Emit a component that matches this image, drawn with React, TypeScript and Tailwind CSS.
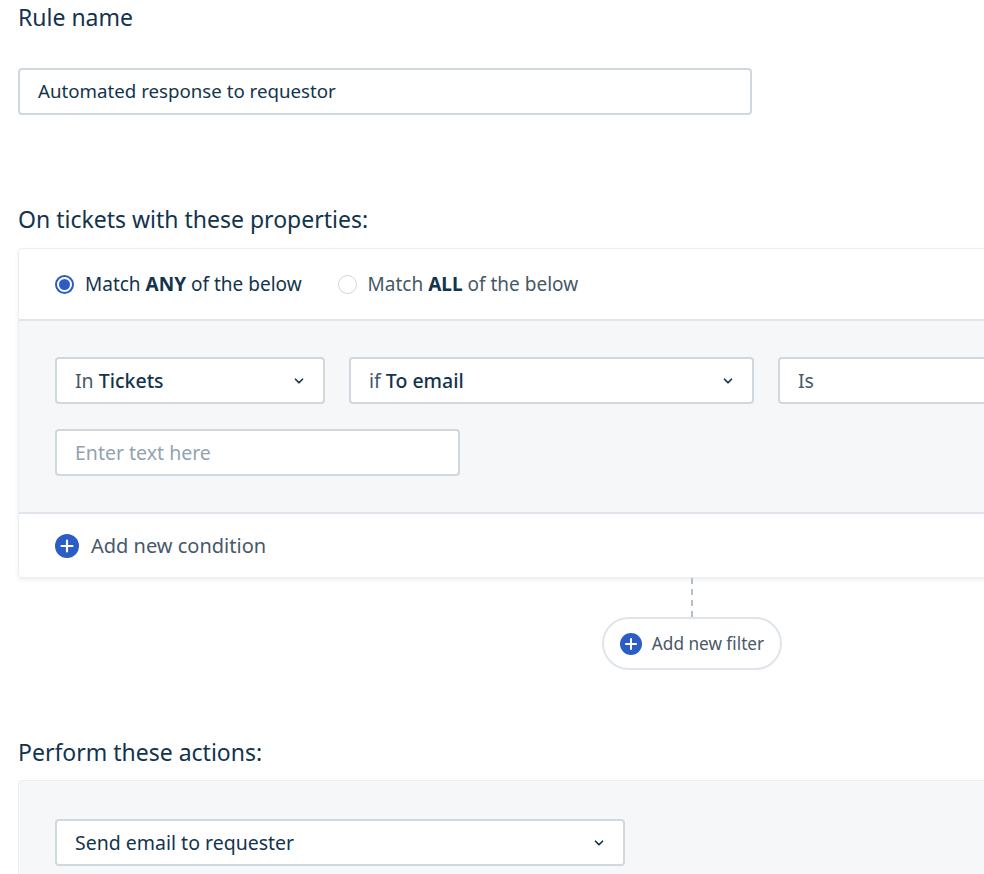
import React, { useState } from 'react';
import { ChevronDown } from 'lucide-react';

const PlusCircle: React.FC<{ size?: number }> = ({ size = 24 }) => (
  <svg width={size} height={size} viewBox="0 0 24 24" className="shrink-0">
    <circle cx="12" cy="12" r="12" fill="#2c5cc5" />
    <path d="M12 6.5v11M6.5 12h11" stroke="#fff" strokeWidth="2.2" strokeLinecap="round" />
  </svg>
);

const SelectBox: React.FC<{ prefix?: string; value: string; className?: string; caret?: boolean; strong?: boolean }> = ({
  prefix,
  value,
  className = '',
  caret = true,
  strong = false,
}) => (
  <div
    className={`h-[47px] shrink-0 flex items-center justify-between rounded-[4px] border-2 border-[#cfd7df] bg-white pl-[18px] pr-[17px] ${className}`}
  >
    <span className="text-[19.5px]">
      {prefix && <span className="text-[#475867]">{prefix} </span>}
      <span className={`text-[#12344d] ${strong ? 'font-medium' : ''}`}>{value}</span>
    </span>
    {caret && <ChevronDown size={14} strokeWidth={3} className="text-[#12344d]" />}
  </div>
);

const Radio: React.FC<{ checked: boolean; label: string; strong: string; onClick: () => void }> = ({
  checked,
  label,
  strong,
  onClick,
}) => (
  <button onClick={onClick} className="flex items-center gap-[11px]">
    {checked ? (
      <span className="w-[19px] h-[19px] rounded-full border-2 border-[#2c5cc5] flex items-center justify-center">
        <span className="w-[11px] h-[11px] rounded-full bg-[#2c5cc5]" />
      </span>
    ) : (
      <span className="w-[19px] h-[19px] rounded-full border border-[#cfd7df] bg-white" />
    )}
    <span className={`text-[19px] ${checked ? 'text-[#12344d]' : 'text-[#475867]'}`}>
      {label} <b className="font-bold text-[#12344d]">{strong}</b> of the below
    </span>
  </button>
);

const App: React.FC = () => {
  const [matchAll, setMatchAll] = useState(false);

  return (
    <div className="w-[984px] h-[874px] overflow-hidden bg-white font-['Noto_Sans',sans-serif] text-[#12344d]">
      <div className="pl-[18px] w-[1100px]">
        <h2 className="text-[23px] leading-[28px] pt-[3px]">Rule name</h2>
        <div className="mt-[37px] w-[734px] h-[47px] rounded-[4px] border-2 border-[#cfd7df] flex items-center px-[18px] text-[18.7px]">
          Automated response to requestor
        </div>

        <h2 className="mt-[90px] text-[23px] leading-[28px]">On tickets with these properties:</h2>
        <div className="mt-[15px] rounded-[4px] border border-[#ebeff3] shadow-[0_2px_4px_rgba(18,52,77,0.08)]">
          <div className="h-[70px] flex items-center gap-[36px] pl-[36px]">
            <Radio checked={!matchAll} label="Match" strong="ANY" onClick={() => setMatchAll(false)} />
            <Radio checked={matchAll} label="Match" strong="ALL" onClick={() => setMatchAll(true)} />
          </div>
          <div className="bg-[#f5f7f9] border-y-2 border-[#dfe5ea] pt-[36px] pb-[36px] pl-[36px] flex flex-col gap-[25px]">
            <div className="flex gap-[24px]">
              <SelectBox prefix="In" value="Tickets" strong className="w-[270px]" />
              <SelectBox prefix="if" value="To email" strong className="w-[405px]" />
              <SelectBox prefix="" value="Is" caret={false} className="w-[300px] [&_span]:text-[#475867]" />
            </div>
            <div className="w-[405px] h-[47px] rounded-[4px] border-2 border-[#cfd7df] bg-white flex items-center px-[18px] text-[19.5px] text-[#92a2b1]">
              Enter text here
            </div>
          </div>
          <div className="h-[63px] flex items-center gap-[12px] pl-[36px]">
            <PlusCircle />
            <span className="text-[20px] text-[#475867]">Add new condition</span>
          </div>
        </div>

        <div className="ml-[584px] w-[180px] flex flex-col items-center">
          <div className="h-[39px] border-l-2 border-dashed border-[#b6bfc7]" />
          <button className="h-[53px] w-[180px] rounded-full border-2 border-[#dfe5ea] flex items-center justify-center gap-[10px]">
            <PlusCircle size={22} />
            <span className="text-[17.2px] text-[#475867]">Add new filter</span>
          </button>
        </div>

        <h2 className="mt-[68px] text-[23px] leading-[28px]">Perform these actions:</h2>
        <div className="mt-[14px] h-[120px] rounded-[4px] border border-[#ebeff3] bg-[#f5f7f9] pt-[38px] pl-[36px]">
          <SelectBox value="Send email to requester" className="w-[570px]" />
        </div>
      </div>
    </div>
  );
};

export default App;
